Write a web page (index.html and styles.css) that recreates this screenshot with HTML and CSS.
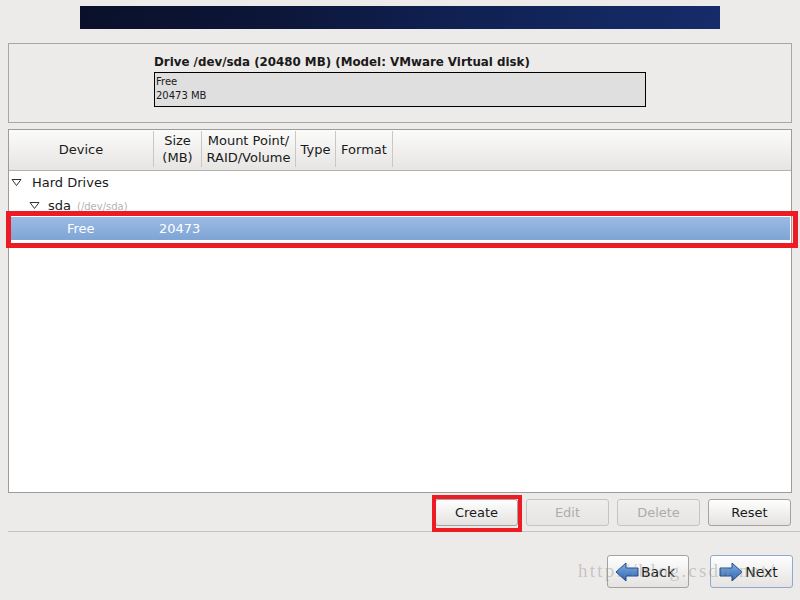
FILE: index.html
```html
<!DOCTYPE html>
<html lang="en">
<head>
    <meta charset="UTF-8">
    <title>Partitioning</title>
    <link rel="stylesheet" href="styles.css">
</head>
<body>
    <div class="banner"></div>

    <div class="drive-box">
        <div class="drive-title">Drive /dev/sda (20480 MB) (Model: VMware Virtual disk)</div>
        <div class="drive-bar">
            <div>Free</div>
            <div>20473 MB</div>
        </div>
    </div>

    <div class="tree">
        <div class="tree-head">
            <div class="col col-device">Device</div>
            <div class="col col-size">Size<br>(MB)</div>
            <div class="col col-mount">Mount Point/<br>RAID/Volume</div>
            <div class="col col-type">Type</div>
            <div class="col col-format">Format</div>
        </div>
        <div class="row">
            <svg class="expander" width="11" height="9" viewBox="0 0 11 9"><polygon points="1,1.5 10,1.5 5.5,7.5" fill="#fff" stroke="#333" stroke-width="1"/></svg>
            <span class="label">Hard Drives</span>
        </div>
        <div class="row level-2">
            <svg class="expander" width="11" height="9" viewBox="0 0 11 9"><polygon points="1,1.5 10,1.5 5.5,7.5" fill="#fff" stroke="#333" stroke-width="1"/></svg>
            <span class="label">sda</span>
            <span class="path">(/dev/sda)</span>
        </div>
        <div class="row selected">
            <span class="cell-name">Free</span>
            <span class="cell-size">20473</span>
        </div>
        <div class="mark-row"></div>
    </div>

    <div class="actions">
        <span class="mark-wrap">
            <button class="btn">Create</button>
            <span class="mark-btn"></span>
        </span>
        <button class="btn" disabled>Edit</button>
        <button class="btn" disabled>Delete</button>
        <button class="btn">Reset</button>
    </div>

    <div class="separator"></div>

    <div class="nav">
        <button class="btn nav-btn">
            <svg width="24" height="20" viewBox="0 0 24 20">
                <defs>
                    <linearGradient id="ab" x1="0" y1="0" x2="0" y2="1">
                        <stop offset="0" stop-color="#7fb0e8"/>
                        <stop offset="1" stop-color="#2b62ad"/>
                    </linearGradient>
                </defs>
                <polygon points="1,10 11,1 11,6 23,6 23,14 11,14 11,19" fill="url(#ab)" stroke="#1f4d8c" stroke-width="1" stroke-linejoin="round"/>
            </svg>
            Back
        </button>
        <button class="btn nav-btn focused">
            <svg width="24" height="20" viewBox="0 0 24 20">
                <defs>
                    <linearGradient id="an" x1="0" y1="0" x2="0" y2="1">
                        <stop offset="0" stop-color="#7fb0e8"/>
                        <stop offset="1" stop-color="#2b62ad"/>
                    </linearGradient>
                </defs>
                <polygon points="23,10 13,1 13,6 1,6 1,14 13,14 13,19" fill="url(#an)" stroke="#1f4d8c" stroke-width="1" stroke-linejoin="round"/>
            </svg>
            Next
        </button>
    </div>

    <div class="watermark">http://blog.csdn.net/</div>
</body>
</html>
```

FILE: styles.css
```css
body {
    margin: 0;
    width: 800px;
    height: 600px;
    overflow: hidden;
    position: relative;
    background-color: #edebe9;
    font-family: "DejaVu Sans", sans-serif;
    font-size: 13px;
    color: #1a1a1a;
}
.banner {
    width: 640px;
    height: 23px;
    margin: 6px auto 0;
    background: linear-gradient(100deg, #0a1029 0%, #0c1638 30%, #0f1f4f 55%, #13275f 80%, #162b69 100%);
}
.drive-box {
    margin: 14px 8px 0;
    border: 1px solid #a9a7a3;
    padding: 10px 0 0 145px;
    height: 68px;
}
.drive-title {
    font-weight: bold;
    font-size: 11.85px;
    line-height: 16px;
    height: 18px;
}
.drive-bar {
    width: 489px;
    height: 31px;
    border: 1px solid #000;
    background-color: #dfdfdf;
    font-size: 10px;
    line-height: 14px;
    padding: 2px 0 0 1px;
}
.tree {
    position: relative;
    margin: 6px 8px 0;
    height: 362px;
    border: 1px solid #9e9c98;
    background-color: #fff;
}
.tree-head {
    display: flex;
    height: 40px;
    border-bottom: 1px solid #b3b1ad;
    background: linear-gradient(#fbfbfa, #e6e5e3);
}
.col {
    display: flex;
    align-items: center;
    justify-content: center;
    text-align: center;
    line-height: 17px;
    border-right: 1px solid #cac8c4;
    box-sizing: border-box;
    margin: 1px 0 3px;
}
.col-device { width: 145px; }
.col-size { width: 48px; }
.col-mount { width: 94px; }
.col-type { width: 40px; }
.col-format { width: 57px; }
.row {
    display: flex;
    align-items: center;
    height: 23px;
    padding-left: 2px;
}
.row.level-2 {
    padding-left: 20px;
}
.expander {
    margin-right: 10px;
}
.level-2 .expander {
    margin-right: 8px;
}
.path {
    font-size: 10px;
    color: #b5b3af;
    margin-left: 6px;
    padding-top: 2px;
}
.row.selected {
    margin: 0 1px;
    padding-left: 0;
    background: linear-gradient(#9cbbe4, #7ea4d5);
    color: #fff;
}
.cell-name {
    margin-left: 57px;
    width: 92px;
}
.mark-row {
    position: absolute;
    left: -3px;
    top: 81px;
    width: 792px;
    height: 37px;
    border: 5px solid #ed1c24;
    box-sizing: border-box;
}
.actions {
    display: flex;
    justify-content: flex-end;
    gap: 8px;
    margin-top: 6px;
    padding-right: 9px;
}
.btn {
    width: 83px;
    height: 27px;
    border: 1px solid #a4a29e;
    border-radius: 3px;
    background: linear-gradient(#fefefe, #e4e3e1);
    font-family: "DejaVu Sans", sans-serif;
    font-size: 13px;
    color: #1a1a1a;
    padding: 0;
}
.btn:disabled {
    color: #aeaca8;
    border-color: #c6c4c0;
    background: linear-gradient(#efeeec, #e6e5e3);
}
.mark-wrap {
    position: relative;
    display: flex;
}
.mark-btn {
    position: absolute;
    left: -3px;
    top: -4px;
    right: -4px;
    bottom: -6px;
    border: 4px solid #ed1c24;
}
.separator {
    margin: 5px 0 0 8px;
    border-top: 1px solid #c6c4c0;
}
.nav {
    display: flex;
    justify-content: flex-end;
    gap: 21px;
    margin-top: 23px;
    padding-right: 7px;
}
.nav-btn {
    display: flex;
    align-items: center;
    justify-content: center;
    gap: 2px;
    width: 82px;
    height: 33px;
    font-size: 14px;
}
.nav-btn svg {
    margin-left: -6px;
}
.nav-btn.focused {
    width: 83px;
    border-color: #8fa9cf;
}
.watermark {
    position: absolute;
    z-index: 2;
    left: 578px;
    top: 560px;
    font-family: "Liberation Serif", serif;
    font-size: 19px;
    letter-spacing: 2.2px;
    color: rgba(150, 148, 144, 0.45);
    pointer-events: none;
}
```
